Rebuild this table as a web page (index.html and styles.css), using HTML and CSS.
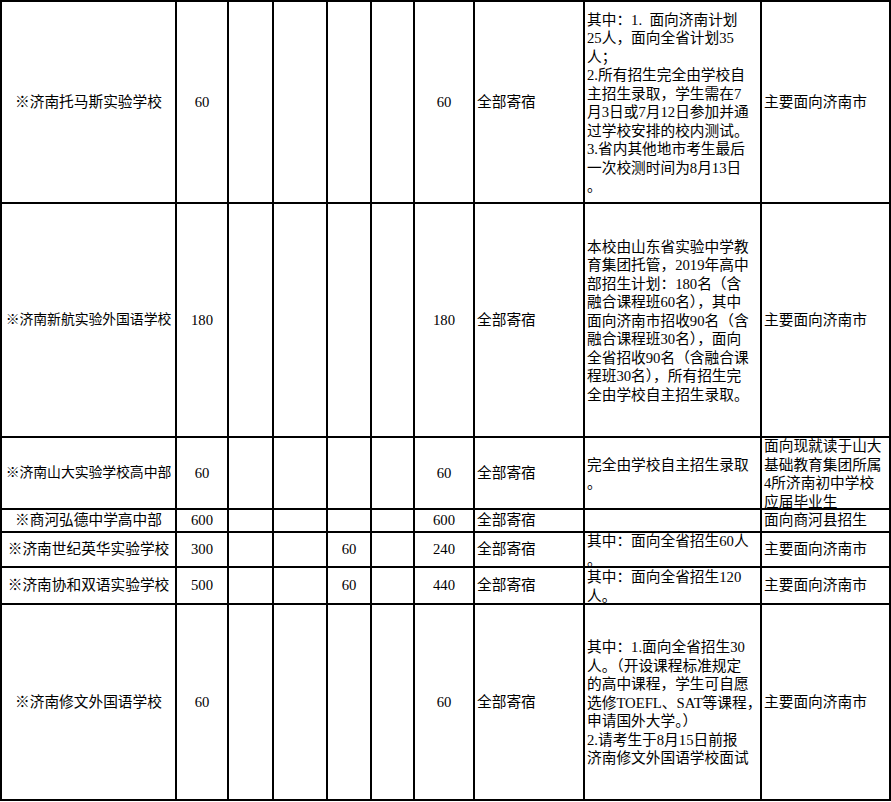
FILE: index.html
```html
<!DOCTYPE html>
<html lang="zh-CN">
<head>
<meta charset="utf-8">
<title>招生计划表</title>
<link rel="stylesheet" href="styles.css">
</head>
<body>
<div class="sheet">
  <!-- row 1 -->
  <div class="cell center">※济南托马斯实验学校</div>
  <div class="cell center">60</div>
  <div class="cell"></div>
  <div class="cell"></div>
  <div class="cell"></div>
  <div class="cell"></div>
  <div class="cell center">60</div>
  <div class="cell">全部寄宿</div>
  <div class="cell"><div class="text">其中：1.&nbsp;&nbsp;面向济南计划<br>25人，面向全省计划35<br>人；<br>2.所有招生完全由学校自<br>主招生录取，学生需在7<br>月3日或7月12日参加并通<br>过学校安排的校内测试。<br>3.省内其他地市考生最后<br>一次校测时间为8月13日<br>。</div></div>
  <div class="cell">主要面向济南市</div>

  <!-- row 2 -->
  <div class="cell center shrink">※济南新航实验外国语学校</div>
  <div class="cell center">180</div>
  <div class="cell"></div>
  <div class="cell"></div>
  <div class="cell"></div>
  <div class="cell"></div>
  <div class="cell center">180</div>
  <div class="cell">全部寄宿</div>
  <div class="cell"><div class="text">本校由山东省实验中学教<br>育集团托管，2019年高中<br>部招生计划：180名（含<br>融合课程班60名），其中<br>面向济南市招收90名（含<br>融合课程班30名），面向<br>全省招收90名（含融合课<br>程班30名），所有招生完<br>全由学校自主招生录取。</div></div>
  <div class="cell">主要面向济南市</div>

  <!-- row 3 -->
  <div class="cell center shrink">※济南山大实验学校高中部</div>
  <div class="cell center">60</div>
  <div class="cell"></div>
  <div class="cell"></div>
  <div class="cell"></div>
  <div class="cell"></div>
  <div class="cell center">60</div>
  <div class="cell">全部寄宿</div>
  <div class="cell"><div class="text">完全由学校自主招生录取<br>。</div></div>
  <div class="cell"><div class="text">面向现就读于山大<br>基础教育集团所属<br>4所济南初中学校<br>应届毕业生</div></div>

  <!-- row 4 -->
  <div class="cell center">※商河弘德中学高中部</div>
  <div class="cell center">600</div>
  <div class="cell"></div>
  <div class="cell"></div>
  <div class="cell"></div>
  <div class="cell"></div>
  <div class="cell center">600</div>
  <div class="cell">全部寄宿</div>
  <div class="cell"></div>
  <div class="cell">面向商河县招生</div>

  <!-- row 5 -->
  <div class="cell center">※济南世纪英华实验学校</div>
  <div class="cell center">300</div>
  <div class="cell"></div>
  <div class="cell"></div>
  <div class="cell center">60</div>
  <div class="cell"></div>
  <div class="cell center">240</div>
  <div class="cell">全部寄宿</div>
  <div class="cell"><div class="text">其中：面向全省招生60人<br>。</div></div>
  <div class="cell">主要面向济南市</div>

  <!-- row 6 -->
  <div class="cell center">※济南协和双语实验学校</div>
  <div class="cell center">500</div>
  <div class="cell"></div>
  <div class="cell"></div>
  <div class="cell center">60</div>
  <div class="cell"></div>
  <div class="cell center">440</div>
  <div class="cell">全部寄宿</div>
  <div class="cell"><div class="text">其中：面向全省招生120<br>人。</div></div>
  <div class="cell">主要面向济南市</div>

  <!-- row 7 -->
  <div class="cell center">※济南修文外国语学校</div>
  <div class="cell center">60</div>
  <div class="cell"></div>
  <div class="cell"></div>
  <div class="cell"></div>
  <div class="cell"></div>
  <div class="cell center">60</div>
  <div class="cell">全部寄宿</div>
  <div class="cell"><div class="text">其中：1.面向全省招生30<br>人。（开设课程标准规定<br>的高中课程，学生可自愿<br>选修TOEFL、SAT等课程，<br>申请国外大学。）<br>2.请考生于8月15日前报<br>济南修文外国语学校面试</div></div>
  <div class="cell">主要面向济南市</div>
</div>
</body>
</html>
```

FILE: styles.css
```css
html, body {
  margin: 0;
  padding: 0;
  background: #fff;
}

body {
  font-family: "Liberation Serif", "Noto Sans CJK SC", serif;
  font-size: 14.7px;
  line-height: 18.5px;
  color: #000;
}

.sheet {
  display: inline-grid;
  grid-template-columns: 173px 50px 43px 52px 42px 41px 58px 108px 175px 127px;
  grid-template-rows: 200px 232px 70px 21px 33px 35px 194px;
  gap: 2px;
  padding: 2px;
  background: #000;
}

.cell {
  background: #fff;
  display: flex;
  align-items: center;
  justify-content: flex-start;
  padding: 0 2px;
  overflow: hidden;
  white-space: nowrap;
}

.cell.center {
  justify-content: center;
  padding: 0;
}

.cell.shrink {
  font-size: 13.9px;
  letter-spacing: -0.1px;
}

.text {
  white-space: nowrap;
  flex: none;
  padding-top: 2px;
}
```
